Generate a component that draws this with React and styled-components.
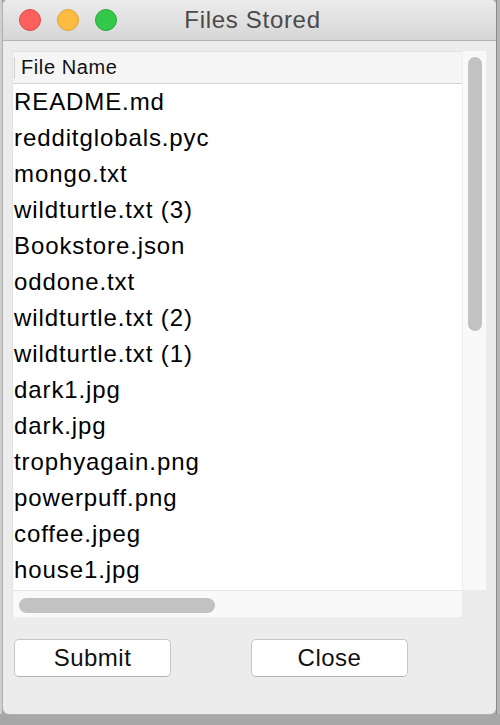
import styled, { createGlobalStyle } from "styled-components";

const files = [
  "README.md",
  "redditglobals.pyc",
  "mongo.txt",
  "wildturtle.txt (3)",
  "Bookstore.json",
  "oddone.txt",
  "wildturtle.txt (2)",
  "wildturtle.txt (1)",
  "dark1.jpg",
  "dark.jpg",
  "trophyagain.png",
  "powerpuff.png",
  "coffee.jpeg",
  "house1.jpg",
];

const GlobalStyle = createGlobalStyle`
  html, body {
    margin: 0;
    padding: 0;
    background: #b9b9b9;
  }
  * {
    box-sizing: border-box;
  }
`;

const Desk = styled.div`
  width: 500px;
  height: 725px;
  display: flex;
  flex-direction: column;
  background: #a7a7a7;
  overflow: hidden;
  font-family: "Liberation Sans", Arial, sans-serif;
`;

const Upper = styled.div`
  display: flex;
  height: 714px;
`;

const LeftStrip = styled.div`
  width: 3px;
  background: #cfcfcf;
  border-right: 1px solid #9c9c9c;
`;

const RightStrip = styled.div`
  flex: 1;
  background: #b4b4b4;
  border-left: 1px solid #8a8a8a;
`;

const Window = styled.div`
  width: 493px;
  display: flex;
  flex-direction: column;
  background: #ececec;
  border-radius: 5px 5px 6px 6px;
  overflow: hidden;
  box-shadow: 0 0 0 1px #b0b0b0;
`;

const TitleBar = styled.div`
  height: 41px;
  display: flex;
  align-items: center;
  padding-left: 16px;
  background: linear-gradient(#ececec, #d6d6d6);
  border-bottom: 1px solid #b1b1b1;
`;

const Lights = styled.div`
  display: flex;
  gap: 16px;
`;

const Light = styled.span`
  width: 22px;
  height: 22px;
  border-radius: 50%;
  background: ${(p) => p.$fill};
  border: 1px solid ${(p) => p.$edge};
`;

const Title = styled.div`
  flex: 1;
  text-align: center;
  margin-left: -108px;
  font-size: 24px;
  letter-spacing: 0.7px;
  color: #4a4a4a;
`;

const Body = styled.div`
  flex: 1;
  display: flex;
  flex-direction: column;
  padding: 10px 10px 0 9px;
`;

const Table = styled.div`
  display: grid;
  grid-template-columns: 450px 24px;
  grid-template-rows: 539px 27px;
`;

const List = styled.div`
  background: #fff;
  border-top: 1px solid #e2e2e2;
  border-left: 1px solid #e2e2e2;
  display: flex;
  flex-direction: column;
  overflow: hidden;
`;

const Header = styled.div`
  height: 32px;
  flex-shrink: 0;
  display: flex;
  align-items: center;
  background: #f5f5f5;
  border-bottom: 1px solid #d4d4d4;
  font-size: 20px;
  letter-spacing: 0.6px;
  color: #111;
`;

const HeaderMark = styled.span`
  width: 1px;
  height: 22px;
  background: #d0d0d0;
  margin: 0 6px 0 1px;
`;

const Row = styled.div`
  height: 36px;
  flex-shrink: 0;
  display: flex;
  align-items: center;
  padding-left: 1px;
  font-size: 24px;
  letter-spacing: 0.9px;
  color: #000;
  white-space: nowrap;
`;

const VTrack = styled.div`
  background: #f9f9f9;
  border-left: 1px solid #ededed;
  padding: 6px 4px 0 5px;
`;

const VThumb = styled.div`
  width: 14px;
  height: 274px;
  border-radius: 7px;
  background: #c2c2c2;
`;

const HTrack = styled.div`
  background: #f9f9f9;
  border-top: 1px solid #e6e6e6;
  border-left: 1px solid #e2e2e2;
  padding: 7px 0 0 6px;
`;

const HThumb = styled.div`
  width: 196px;
  height: 15px;
  border-radius: 8px;
  background: #c2c2c2;
`;

const Corner = styled.div`
  background: #ececec;
`;

const Buttons = styled.div`
  display: flex;
  gap: 80px;
  padding: 22px 0 0 2px;
`;

const Button = styled.button`
  width: 157px;
  height: 38px;
  background: #fff;
  border: 1px solid #c6c6c6;
  border-bottom-color: #b4b4b4;
  border-radius: 5px;
  font-family: "Liberation Sans", Arial, sans-serif;
  font-size: 24px;
  letter-spacing: 0.5px;
  color: #111;
  padding: 0;
`;

export default function App() {
  return (
    <Desk>
      <GlobalStyle />
      <Upper>
        <LeftStrip />
        <Window>
          <TitleBar>
            <Lights>
              <Light $fill="#fc605c" $edge="#de4a44" />
              <Light $fill="#fdbc40" $edge="#dea236" />
              <Light $fill="#34c84a" $edge="#27aa35" />
            </Lights>
            <Title>Files Stored</Title>
          </TitleBar>
          <Body>
            <Table>
              <List>
                <Header>
                  <HeaderMark />
                  File Name
                </Header>
                {files.map((name) => (
                  <Row key={name}>{name}</Row>
                ))}
              </List>
              <VTrack>
                <VThumb />
              </VTrack>
              <HTrack>
                <HThumb />
              </HTrack>
              <Corner />
            </Table>
            <Buttons>
              <Button>Submit</Button>
              <Button>Close</Button>
            </Buttons>
          </Body>
        </Window>
        <RightStrip />
      </Upper>
    </Desk>
  );
}
